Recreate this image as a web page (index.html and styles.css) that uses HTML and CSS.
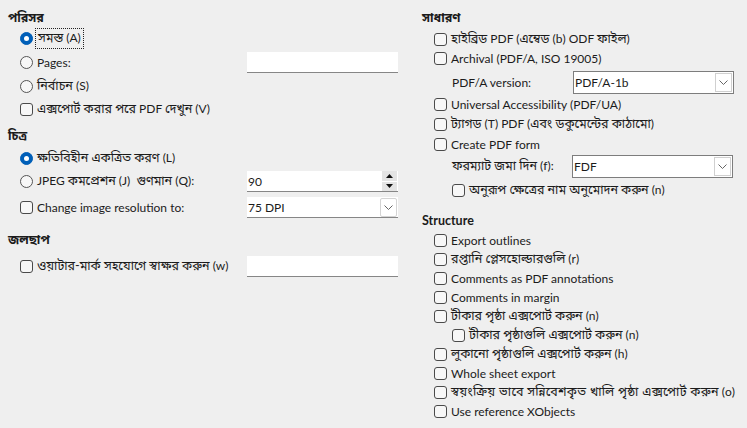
FILE: index.html
```html
<!DOCTYPE html>
<html lang="bn">
<head>
<meta charset="utf-8">
<link rel="stylesheet" href="styles.css">
</head>
<body>
<div class="page">
  <div class="col left">
    <div class="heading">পরিসর</div>
    <div class="row r1"><span class="radio on"></span><span class="lbl focus"><span class="bn">সমস্ত</span> (A)</span></div>
    <div class="row r2"><span class="radio"></span><span class="lbl grow">Pages:</span><div class="field"></div></div>
    <div class="row r3"><span class="radio"></span><span class="lbl"><span class="bn">নির্বাচন</span> (S)</span></div>
    <div class="row r4"><span class="check"></span><span class="lbl"><span class="bn">এক্সপোর্ট করার পরে</span> PDF <span class="bn">দেখুন</span> (V)</span></div>

    <div class="heading h2">চিত্র</div>
    <div class="row r5"><span class="radio on"></span><span class="lbl"><span class="bn">ক্ষতিবিহীন একত্রিত করণ</span> (L)</span></div>
    <div class="row r6"><span class="radio"></span><span class="lbl grow">JPEG <span class="bn">কমপ্রেশন</span> (J)&nbsp; <span class="bn">গুণমান</span> (Q):</span>
      <div class="field spin"><span class="val">90</span>
        <div class="spinbtns">
          <span class="sb"><svg width="7" height="4" viewBox="0 0 7 4"><path d="M0 4 L3.5 0 L7 4Z" fill="#111"/></svg></span>
          <span class="sb"><svg width="7" height="4" viewBox="0 0 7 4"><path d="M0 0 L3.5 4 L7 0Z" fill="#111"/></svg></span>
        </div>
      </div>
    </div>
    <div class="row r7"><span class="check"></span><span class="lbl grow">Change image resolution to:</span>
      <div class="field combo"><span class="val">75 DPI</span>
        <span class="cbtn"><svg width="9" height="5" viewBox="0 0 9 5"><path d="M0.5 0.5 L4.5 4.5 L8.5 0.5" fill="none" stroke="#666" stroke-width="1"/></svg></span>
      </div>
    </div>

    <div class="heading h3">জলছাপ</div>
    <div class="row r8"><span class="check"></span><span class="lbl grow"><span class="bn">ওয়াটার-মার্ক সহযোগে স্বাক্ষর করুন</span> (w)</span><div class="field"></div></div>
  </div>

  <div class="col right">
    <div class="heading">সাধারণ</div>
    <div class="row s first"><span class="check"></span><span class="lbl"><span class="bn">হাইব্রিড</span> PDF (<span class="bn">এম্বেড</span> (b) ODF <span class="bn">ফাইল</span>)</span></div>
    <div class="row s"><span class="check"></span><span class="lbl">Archival (PDF/A, ISO 19005)</span></div>
    <div class="row sub drop"><span class="lbl w121">PDF/A version:</span>
      <div class="box"><span class="val">PDF/A-1b</span>
        <span class="bbtn"><svg width="9" height="5" viewBox="0 0 9 5"><path d="M0.5 0.5 L4.5 4.5 L8.5 0.5" fill="none" stroke="#666" stroke-width="1"/></svg></span>
      </div>
    </div>
    <div class="row t"><span class="check"></span><span class="lbl">Universal Accessibility (PDF/UA)</span></div>
    <div class="row t"><span class="check"></span><span class="lbl"><span class="bn">ট্যাগড</span> (T) PDF (<span class="bn">এবং ডকুমেন্টের কাঠামো</span>)</span></div>
    <div class="row t"><span class="check"></span><span class="lbl">Create PDF form</span></div>
    <div class="row sub drop d2"><span class="lbl w120"><span class="bn">ফরম্যাট জমা দিন</span> (f):</span>
      <div class="box"><span class="val">FDF</span>
        <span class="bbtn"><svg width="9" height="5" viewBox="0 0 9 5"><path d="M0.5 0.5 L4.5 4.5 L8.5 0.5" fill="none" stroke="#666" stroke-width="1"/></svg></span>
      </div>
    </div>
    <div class="row t sub"><span class="check"></span><span class="lbl"><span class="bn">অনুরূপ ক্ষেত্রের নাম অনুমোদন করুন</span> (n)</span></div>

    <div class="heading hs">Structure</div>
    <div class="row s"><span class="check"></span><span class="lbl">Export outlines</span></div>
    <div class="row s"><span class="check"></span><span class="lbl"><span class="bn">রপ্তানি প্লেসহোল্ডারগুলি</span> (r)</span></div>
    <div class="row s"><span class="check"></span><span class="lbl">Comments as PDF annotations</span></div>
    <div class="row s"><span class="check"></span><span class="lbl">Comments in margin</span></div>
    <div class="row s"><span class="check"></span><span class="lbl"><span class="bn">টীকার পৃষ্ঠা এক্সপোর্ট করুন</span> (n)</span></div>
    <div class="row s sub"><span class="check"></span><span class="lbl"><span class="bn">টীকার পৃষ্ঠাগুলি এক্সপোর্ট করুন</span> (n)</span></div>
    <div class="row s"><span class="check"></span><span class="lbl"><span class="bn">লুকানো পৃষ্ঠাগুলি এক্সপোর্ট করুন</span> (h)</span></div>
    <div class="row s"><span class="check"></span><span class="lbl">Whole sheet export</span></div>
    <div class="row s"><span class="check"></span><span class="lbl"><span class="bn wide">স্বয়ংক্রিয় ভাবে সন্নিবেশকৃত খালি পৃষ্ঠা এক্সপোর্ট করুন</span> (o)</span></div>
    <div class="row s"><span class="check"></span><span class="lbl">Use reference XObjects</span></div>
  </div>
</div>
</body>
</html>
```
FILE: styles.css
```css
html, body {
  margin: 0;
  padding: 0;
  background: #efefef;
}
body {
  width: 747px;
  height: 428px;
  overflow: hidden;
  font-family: Lato, "Noto Sans Bengali", "Noto Sans", sans-serif;
  font-size: 12px;
  color: #1b1b1b;
}
.bn { font-size: 12.5px; }
.bn.wide { letter-spacing: 0.3px; }
.page {
  display: flex;
  padding: 8px 0 0 8px;
}
.col {
  display: flex;
  flex-direction: column;
}
.left { width: 390px; }
.right { width: 313px; margin-left: 24px; }

.heading {
  height: 20px;
  line-height: 20px;
  font-weight: bold;
  font-size: 12.5px;
}
.h2 { margin-top: 6px; }
.h3 { margin-top: 12px; }
.hs { margin-top: 11px; }

.row {
  display: flex;
  align-items: center;
  height: 21px;
  padding-left: 12px;
  white-space: nowrap;
}
.r2 { margin-top: 3px; }
.r3 { margin-top: 3px; }
.r4 { margin-top: 2px; }
.r5 { margin-top: 2px; }
.r6 { margin-top: 2px; }
.r7 { margin-top: 5px; }
.r8 { margin-top: 6px; }

.row.s { height: 19px; }
.row.s.first { margin-top: 2px; }
.row.t { height: 20px; }
.row.sub { padding-left: 30px; }
.row.drop { height: 23px; margin-top: 3px; padding-left: 30px; }
.row.drop.d2 { margin-top: 1px; }
.row.t.sub { margin-top: 2px; }

.lbl { margin-left: 4px; }
.sub .lbl.w121, .sub .lbl.w120 { margin-left: 0; }
.w121 { width: 121px; }
.w120 { width: 120px; }
.grow { flex: 1; }

.focus {
  outline: 1px dotted #222;
  outline-offset: 1px;
  padding: 0 1px;
}

.check {
  width: 11px;
  height: 11px;
  border: 1px solid #4a4a4a;
  border-radius: 3px;
  background: #f7f7f7;
  flex: none;
}
.radio {
  width: 11px;
  height: 11px;
  border: 1px solid #555;
  border-radius: 50%;
  background: #f7f7f7;
  flex: none;
  position: relative;
}
.radio.on {
  background: #005fb8;
  border-color: #005fb8;
}
.radio.on::after {
  content: "";
  position: absolute;
  left: 3px;
  top: 3px;
  width: 5px;
  height: 5px;
  border-radius: 50%;
  background: #fff;
}

.field {
  width: 151px;
  height: 20px;
  background: #fff;
  border-bottom: 1px solid #868686;
  display: flex;
  align-items: center;
  flex: none;
}
.field .val { flex: 1; padding-left: 1px; }
.spinbtns {
  display: flex;
  flex-direction: column;
  gap: 1px;
  margin-right: 1px;
  align-self: stretch;
}
.sb {
  width: 15px;
  flex: 1;
  background: #e4e4e4;
  display: flex;
  align-items: center;
  justify-content: center;
}
.cbtn {
  width: 15px;
  height: 17px;
  border: 1px solid #d4d4d4;
  border-radius: 2px;
  margin-right: 1px;
  display: flex;
  align-items: center;
  justify-content: center;
  background: #fff;
}

.box {
  width: 159px;
  height: 21px;
  border: 1px solid #7d7d7d;
  background: #fff;
  display: flex;
  align-items: center;
}
.box .val { flex: 1; padding-left: 1px; }
.bbtn {
  width: 15px;
  height: 17px;
  border: 1px solid #d0d0d0;
  margin-right: 1px;
  display: flex;
  align-items: center;
  justify-content: center;
}
```
